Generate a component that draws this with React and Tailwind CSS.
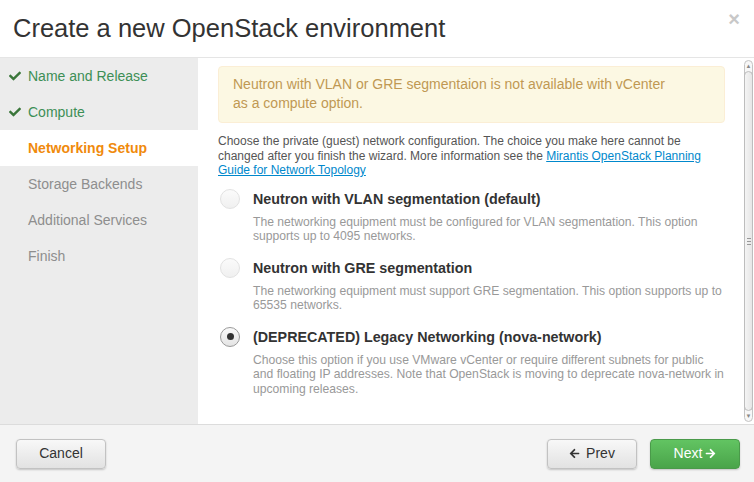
import { FaCheck, FaArrowLeft, FaArrowRight } from 'react-icons/fa';

const steps = [
  { label: 'Name and Release', state: 'done' },
  { label: 'Compute', state: 'done' },
  { label: 'Networking Setup', state: 'active' },
  { label: 'Storage Backends', state: 'todo' },
  { label: 'Additional Services', state: 'todo' },
  { label: 'Finish', state: 'todo' },
];

const options = [
  {
    label: 'Neutron with VLAN segmentation (default)',
    desc: 'The networking equipment must be configured for VLAN segmentation. This option supports up to 4095 networks.',
    checked: false,
  },
  {
    label: 'Neutron with GRE segmentation',
    desc: 'The networking equipment must support GRE segmentation. This option supports up to 65535 networks.',
    checked: false,
  },
  {
    label: '(DEPRECATED) Legacy Networking (nova-network)',
    desc: 'Choose this option if you use VMware vCenter or require different subnets for public and floating IP addresses. Note that OpenStack is moving to deprecate nova-network in upcoming releases.',
    checked: true,
  },
];

const Radio = ({ checked }) => (
  <div
    className={`w-[20px] h-[20px] rounded-full flex items-center justify-center flex-shrink-0 ${
      checked
        ? 'border border-[#9a9a9a] bg-gradient-to-b from-[#fafafa] to-[#e4e4e4]'
        : 'border border-[#e2e2e2] bg-gradient-to-b from-[#fbfbfb] to-[#f0f0f0]'
    }`}
  >
    {checked && <div className="w-[7px] h-[7px] rounded-full bg-[#333]" />}
  </div>
);

export default function App() {
  return (
    <div className="w-[754px] h-[482px] flex flex-col bg-white font-['Liberation_Sans',Arial,sans-serif] text-[#333] overflow-hidden">
      {/* Header */}
      <div className="h-[58px] flex-shrink-0 flex items-start justify-between border-b border-[#e5e5e5] pl-[13px] pr-[14px]">
        <h3 className="text-[25.5px] leading-[30px] mt-[13px] text-[#333]">Create a new OpenStack environment</h3>
        <span className="text-[20px] leading-[20px] mt-[9px] font-bold text-[#c8c8c8]">×</span>
      </div>

      {/* Body */}
      <div className="flex flex-1 min-h-0">
        {/* Wizard steps */}
        <div className="w-[198px] flex-shrink-0 bg-[#ececec] flex flex-col">
          {steps.map((s) => (
            <div
              key={s.label}
              className={`h-[36px] flex items-center text-[14px] ${
                s.state === 'active' ? 'bg-white text-[#f08a0c] font-bold' : ''
              } ${s.state === 'done' ? 'text-[#3d8f56]' : ''} ${s.state === 'todo' ? 'text-[#8e8e8e]' : ''}`}
            >
              <span className="w-[28px] flex justify-center pl-[2px]">
                {s.state === 'done' && <FaCheck className="w-[12px] h-[12px] text-[#3a763a]" />}
              </span>
              {s.label}
            </div>
          ))}
        </div>

        {/* Content */}
        <div className="flex-1 flex min-w-0">
          <div className="flex-1 pl-[20px] pr-[19px] pt-[8px]">
            <div className="bg-[#fcf8e3] border border-[#fbeed5] rounded-[4px] px-[14px] pt-[8px] pb-[9px] text-[14px] leading-[19px] text-[#c09853]">
              Neutron with VLAN or GRE segmentaion is not available with vCenter
              <br />
              as a compute option.
            </div>
            <p className="mt-[11px] text-[12px] leading-[14.5px] text-[#555] pr-[10px]">
              Choose the private (guest) network configuration. The choice you make here cannot be changed after you finish the wizard. More information see the{' '}
              <a className="text-[#0088cc] underline">Mirantis OpenStack Planning Guide for Network Topology</a>
            </p>

            <div className="mt-[11px] flex flex-col gap-[14px]">
              {options.map((o) => (
                <div key={o.label} className="flex gap-[13px] pl-[2px]">
                  <Radio checked={o.checked} />
                  <div className="flex flex-col">
                    <div className="text-[14.3px] leading-[20px] font-bold text-[#333]">{o.label}</div>
                    <div className="mt-[6px] text-[12.15px] leading-[14.5px] text-[#999]">{o.desc}</div>
                  </div>
                </div>
              ))}
            </div>
          </div>

          {/* Scrollbar */}
          <div className="w-[10px] flex-shrink-0 flex flex-col items-stretch py-[2px] pr-[1px]">
            <div className="flex-1 border border-[#c4c4c4] rounded-[5px] bg-[#f7f7f7] flex flex-col">
              <div className="h-[10px] flex items-center justify-center text-[6px] leading-none text-[#888]">▲</div>
              <div className="flex-1 mx-[-1px] border border-[#bdbdbd] rounded-[5px] bg-gradient-to-r from-[#f4f4f4] to-[#e6e6e6] flex items-center justify-center">
                <div className="flex flex-col gap-[2px]">
                  <div className="w-[4px] h-[1px] bg-[#999]" />
                  <div className="w-[4px] h-[1px] bg-[#999]" />
                  <div className="w-[4px] h-[1px] bg-[#999]" />
                </div>
              </div>
              <div className="h-[10px] flex items-center justify-center text-[6px] leading-none text-[#888]">▼</div>
            </div>
          </div>
        </div>
      </div>

      {/* Footer */}
      <div className="h-[58px] flex-shrink-0 bg-[#f4f4f4] border-t border-[#dcdcdc] flex items-center justify-between pl-[16px] pr-[14px]">
        <button className="w-[90px] h-[30px] rounded-[4px] border border-[#c2c2c2] bg-gradient-to-b from-[#f8f8f8] to-[#e2e2e2] shadow-[0_1px_2px_rgba(0,0,0,0.2)] text-[14px] text-[#333]">
          Cancel
        </button>
        <div className="flex gap-[13px]">
          <button className="w-[90px] h-[30px] rounded-[4px] border border-[#c2c2c2] bg-gradient-to-b from-[#f8f8f8] to-[#e2e2e2] shadow-[0_1px_2px_rgba(0,0,0,0.2)] text-[14px] text-[#333] flex items-center justify-center gap-[6px]">
            <FaArrowLeft className="w-[11px] h-[11px]" />
            Prev
          </button>
          <button className="w-[90px] h-[30px] rounded-[4px] border border-[#4a9a4a] bg-gradient-to-b from-[#62c462] to-[#4aa44a] shadow-[0_1px_2px_rgba(0,0,0,0.2)] text-[14px] text-white flex items-center justify-center gap-[3px]">
            Next
            <FaArrowRight className="w-[11px] h-[11px]" />
          </button>
        </div>
      </div>
    </div>
  );
}
